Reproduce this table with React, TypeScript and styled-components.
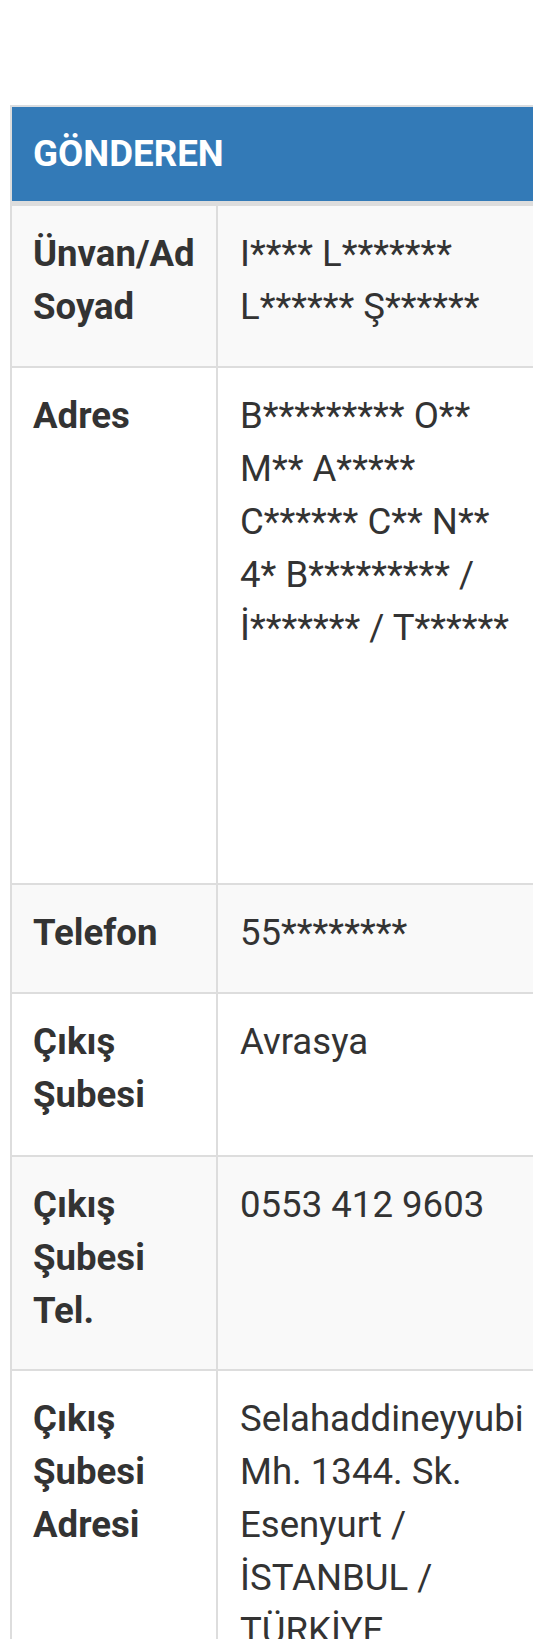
import React from "react";
import styled, { createGlobalStyle } from "styled-components";

const GlobalStyle = createGlobalStyle`
  html, body {
    margin: 0;
    padding: 0;
    background: #ffffff;
    overflow-x: hidden;
  }
  body {
    font-family: Roboto, "Liberation Sans", Arial, sans-serif;
    color: #333333;
  }
  * { box-sizing: border-box; }
`;

const Page = styled.div`
  width: 533px;
  overflow: hidden;
  padding: 105px 0 0 10px;
`;

const Table = styled.div`
  width: 640px;
  border-top: 2px solid #dadde0;
  border-left: 2px solid #dddddd;
  display: flex;
  flex-direction: column;
`;

const Header = styled.div`
  background: #337ab7;
  color: #ffffff;
  font-weight: 700;
  font-size: 36.7px;
  line-height: 52px;
  padding: 21px 21px;
  border-bottom: 5px solid #dddddd;
`;

const Row = styled.div<{ $h: number; $striped: boolean }>`
  display: grid;
  grid-template-columns: 206px 1fr;
  height: ${(p) => p.$h}px;
  background: ${(p) => (p.$striped ? "#f9f9f9" : "#ffffff")};
  border-bottom: 2px solid #dddddd;
`;

const Cell = styled.div<{ $label?: boolean }>`
  padding: 21px 21px 0 ${(p) => (p.$label ? "21px" : "22px")};
  font-size: 36.6px;
  line-height: 53px;
  font-weight: ${(p) => (p.$label ? 700 : 400)};
  color: #333333;
  white-space: nowrap;
  border-right: ${(p) => (p.$label ? "2px solid #dddddd" : "none")};
`;

const Line = styled.div``;

type Entry = { label: string[]; value: string[]; h: number };

const rows: Entry[] = [
  { label: ["Ünvan/Ad", "Soyad"], value: ["I**** L*******", "L****** Ş******"], h: 162 },
  {
    label: ["Adres"],
    value: ["B********* O**", "M** A*****", "C****** C** N**", "4* B********* /", "İ******* / T******"],
    h: 517,
  },
  { label: ["Telefon"], value: ["55********"], h: 109 },
  { label: ["Çıkış", "Şubesi"], value: ["Avrasya"], h: 163 },
  { label: ["Çıkış", "Şubesi", "Tel."], value: ["0553 412 9603"], h: 214 },
  {
    label: ["Çıkış", "Şubesi", "Adresi"],
    value: ["Selahaddineyyubi", "Mh. 1344. Sk.", "Esenyurt /", "İSTANBUL /", "TÜRKİYE"],
    h: 330,
  },
];

export default function App() {
  return (
    <>
      <GlobalStyle />
      <Page>
        <Table>
          <Header>GÖNDEREN</Header>
          {rows.map((r, i) => (
            <Row key={i} $h={r.h} $striped={i % 2 === 0}>
              <Cell $label>
                {r.label.map((l, j) => (
                  <Line key={j}>{l}</Line>
                ))}
              </Cell>
              <Cell>
                {r.value.map((v, j) => (
                  <Line key={j}>{v}</Line>
                ))}
              </Cell>
            </Row>
          ))}
        </Table>
      </Page>
    </>
  );
}
